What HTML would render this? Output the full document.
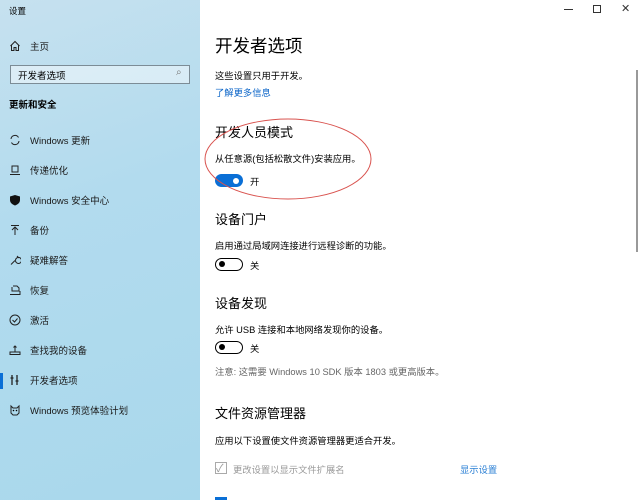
<!DOCTYPE html>
<html><head><meta charset="utf-8"><style>
*{margin:0;padding:0;box-sizing:border-box}
body{width:640px;height:500px;overflow:hidden;font-family:"Liberation Sans","Noto Sans CJK SC",sans-serif;position:relative;background:#fff;color:#000}
#side{position:absolute;left:0;top:0;width:200px;height:500px;background:linear-gradient(160deg,#c6e1ef 0%,#b2dbee 40%,#a9d8ec 100%)}
.a{position:absolute;white-space:nowrap}
.nav{position:absolute;left:30px;font-size:9.5px;color:#1a1a1a}
.ic{position:absolute;left:9px;width:12px;height:12px}
.r{position:absolute;white-space:nowrap;left:215px}
h1{font-weight:normal;font-size:17.5px}
h2{font-weight:normal;font-size:13px}
.t{font-size:9.3px}
.tog{position:absolute;left:215px;width:28px;height:13px;border-radius:7px}
.on{background:#0a6fd6}
.on:after{content:"";position:absolute;right:4px;top:3.5px;width:6px;height:6px;border-radius:50%;background:#fff}
.off{border:1.6px solid #000}
.off:after{content:"";position:absolute;left:3px;top:2px;width:6px;height:6px;border-radius:50%;background:#000}
</style></head><body>
<div id="side">
<div class="a" style="left:9px;top:5px;font-size:8.5px">设置</div>
<svg class="ic" style="top:40px" viewBox="0 0 12 12"><path d="M1.5 6L6 1.5L10.5 6M2.5 5v5.5h2.5v-3h2v3h2.5V5" fill="none" stroke="#222" stroke-width="1"/></svg>
<div class="nav" style="top:39px">主页</div>
<div class="a" style="left:10px;top:65px;width:180px;height:19px;border:1.5px solid #7c8c96;background:rgba(255,255,255,.45)"></div>
<div class="a" style="left:18px;top:68px;font-size:9.5px">开发者选项</div>
<div class="a" style="left:176px;top:67px;font-size:10px;color:#777">⌕</div>
<div class="a" style="left:9px;top:97px;font-size:9.5px;font-weight:bold">更新和安全</div>
<svg class="ic" style="top:134px" viewBox="0 0 12 12"><path d="M2 5A4 4 0 0 1 9.5 3.5M10 7A4 4 0 0 1 2.5 8.5" fill="none" stroke="#222"/></svg>
<div class="nav" style="top:133px">Windows 更新</div>
<svg class="ic" style="top:164px" viewBox="0 0 12 12"><path d="M3 2h6v6H3zM1 10.5h10" fill="none" stroke="#222"/></svg>
<div class="nav" style="top:163px">传递优化</div>
<svg class="ic" style="top:194px" viewBox="0 0 12 12"><path d="M6 1L1 2.5v3.5c0 3 2.5 4.5 5 5.5c2.5-1 5-2.5 5-5.5V2.5z" fill="#111"/></svg>
<div class="nav" style="top:193px">Windows 安全中心</div>
<svg class="ic" style="top:224px" viewBox="0 0 12 12"><path d="M2 1.5h8M6 11V3M3 6l3-3l3 3" fill="none" stroke="#222"/></svg>
<div class="nav" style="top:223px">备份</div>
<svg class="ic" style="top:254px" viewBox="0 0 12 12"><path d="M2 10.5L6 6.5M6.5 6.5a3 3 0 1 0 0-0.1M8 2l2 2" fill="none" stroke="#222"/></svg>
<div class="nav" style="top:253px">疑难解答</div>
<svg class="ic" style="top:284px" viewBox="0 0 12 12"><path d="M1 10.5h10V7M4 2h4l2 2v3H3V3" fill="none" stroke="#222"/></svg>
<div class="nav" style="top:283px">恢复</div>
<svg class="ic" style="top:314px" viewBox="0 0 12 12"><circle cx="6" cy="6" r="5" fill="none" stroke="#222"/><path d="M3.5 6l2 2l3-3.5" fill="none" stroke="#222"/></svg>
<div class="nav" style="top:313px">激活</div>
<svg class="ic" style="top:344px" viewBox="0 0 12 12"><path d="M1 10.5h10V8H1zM6 8V2M4.5 3.5L6 2l1.5 1.5" fill="none" stroke="#222"/></svg>
<div class="nav" style="top:343px">查找我的设备</div>
<div class="a" style="left:0;top:373px;width:3px;height:16px;background:#0a6fd6"></div>
<svg class="ic" style="top:374px" viewBox="0 0 12 12"><path d="M3 1v10M8 1v10M1.5 4h3M6.5 7h3" fill="none" stroke="#222" stroke-width="1.3"/></svg>
<div class="nav" style="top:373px">开发者选项</div>
<svg class="ic" style="top:404px" viewBox="0 0 12 12"><path d="M2 2l2 2h4l2-2v7l-2 2H4L2 9z" fill="none" stroke="#222"/><circle cx="4.5" cy="6.5" r=".8"/><circle cx="7.5" cy="6.5" r=".8"/></svg>
<div class="nav" style="top:403px">Windows 预览体验计划</div>
</div>
<div class="a" style="left:564px;top:9px;width:9px;height:1px;background:#333"></div>
<div class="a" style="left:593px;top:5px;width:8px;height:8px;border:1px solid #333"></div>
<div class="a" style="left:621px;top:2px;font-size:11px;color:#333">✕</div>
<div class="a" style="left:636px;top:70px;width:2px;height:182px;background:#999"></div>

<h1 class="r" style="top:33px">开发者选项</h1>
<div class="r t" style="top:68px">这些设置只用于开发。</div>
<div class="r t" style="top:85px;color:#0a64c8">了解更多信息</div>
<h2 class="r" style="top:122px">开发人员模式</h2>
<div class="r t" style="top:151px">从任意源(包括松散文件)安装应用。</div>
<div class="tog on" style="top:174px"></div>
<div class="a t" style="left:250px;top:174px">开</div>
<svg class="a" style="left:200px;top:115px" width="180" height="90"><ellipse cx="88" cy="44" rx="83" ry="40" fill="none" stroke="#d9534f" stroke-width="1"/></svg>
<h2 class="r" style="top:209px">设备门户</h2>
<div class="r t" style="top:238px">启用通过局域网连接进行远程诊断的功能。</div>
<div class="tog off" style="top:258px"></div>
<div class="a t" style="left:250px;top:258px">关</div>
<h2 class="r" style="top:293px">设备发现</h2>
<div class="r t" style="top:322px">允许 USB 连接和本地网络发现你的设备。</div>
<div class="tog off" style="top:341px"></div>
<div class="a t" style="left:250px;top:341px">关</div>
<div class="r t" style="top:364px;color:#666">注意: 这需要 Windows 10 SDK 版本 1803 或更高版本。</div>
<h2 class="r" style="top:403px">文件资源管理器</h2>
<div class="r t" style="top:433px">应用以下设置使文件资源管理器更适合开发。</div>
<div class="a" style="left:215px;top:462px;width:12px;height:12px;border:1px solid #aaa"></div>
<div class="a" style="left:216px;top:460px;font-size:11px;color:#999">✓</div>
<div class="a t" style="left:233px;top:462px;color:#999">更改设置以显示文件扩展名</div>
<div class="a t" style="left:460px;top:462px;color:#2a7fd4">显示设置</div>
<div class="a" style="left:215px;top:497px;width:12px;height:3px;background:#0a6fd6"></div>
</body></html>
